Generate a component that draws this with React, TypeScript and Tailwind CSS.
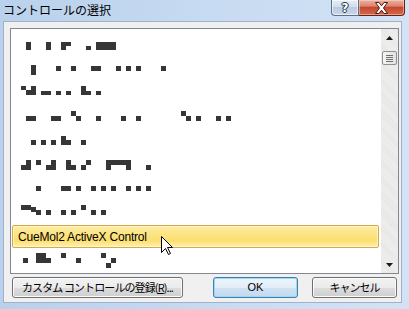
import React from "react";

type R = [number, number, number, number];

const rows: R[][] = [
  [[14, 9, 5, 8], [34, 9, 5, 8], [49, 9, 10, 4], [49, 13, 5, 4], [74, 13, 5, 4], [84, 9, 20, 8]],
  [[19, 8, 5, 10], [44, 9, 5, 5], [59, 9, 5, 5], [79, 9, 10, 5], [104, 9, 5, 5], [114, 9, 5, 5], [124, 9, 5, 5], [149, 9, 5, 5]],
  [[9, 5, 5, 4], [19, 5, 5, 4], [14, 9, 10, 5], [29, 10, 10, 4], [44, 10, 5, 4], [54, 10, 5, 4], [69, 5, 5, 9], [74, 10, 5, 4], [84, 10, 5, 4]],
  [[14, 11, 10, 5], [39, 11, 10, 5], [59, 6, 5, 5], [64, 11, 5, 5], [84, 11, 5, 5], [109, 11, 5, 5], [124, 11, 5, 5], [169, 6, 5, 5], [174, 11, 5, 5], [184, 11, 5, 5], [204, 11, 5, 5], [214, 11, 5, 5]],
  [[49, 7, 5, 4], [19, 11, 5, 5], [29, 11, 5, 5], [39, 11, 5, 5], [49, 11, 10, 5], [69, 11, 5, 5]],
  [[9, 12, 5, 5], [14, 7, 5, 10], [24, 7, 5, 5], [34, 12, 5, 5], [39, 7, 5, 10], [54, 7, 5, 10], [59, 12, 5, 5], [69, 12, 5, 5], [74, 7, 5, 5], [94, 7, 25, 5], [94, 12, 5, 5], [114, 12, 5, 5], [134, 12, 5, 5]],
  [[24, 9, 5, 5], [49, 9, 10, 5], [64, 9, 5, 5], [79, 9, 5, 5], [89, 9, 5, 5], [99, 9, 5, 5], [114, 9, 5, 5], [124, 9, 5, 5], [134, 9, 5, 5]],
  [[9, 4, 10, 5], [19, 6, 5, 5], [24, 9, 5, 5], [34, 9, 5, 5], [49, 9, 5, 5], [59, 9, 5, 5], [69, 4, 5, 5], [79, 9, 5, 5], [89, 9, 5, 5]],
];

const lastRow: R[] = [[11, 9, 5, 5], [24, 4, 10, 10], [34, 9, 5, 5], [49, 4, 5, 5], [64, 9, 5, 5], [89, 4, 5, 5], [99, 9, 5, 5], [94, 14, 5, 5]];

function Blocks({ rects }: { rects: R[] }) {
  return (
    <svg width="367" height="23" className="block">
      {rects.map((r, i) => (
        <rect key={i} x={r[0]} y={r[1]} width={r[2]} height={r[3]} fill="#363636" />
      ))}
    </svg>
  );
}

const jp = "font-['Noto_Sans_CJK_JP',sans-serif]";

const btnBase =
  "h-[21px] rounded-[3px] border flex items-center justify-center text-black leading-none";
const grayBtn =
  "border-[#707070] bg-[linear-gradient(to_bottom,#f2f2f2_0%,#ebebeb_50%,#dddddd_50%,#cfcfcf_100%)] shadow-[inset_0_0_0_1px_#fbfbfb]";

export default function App() {
  return (
    <div className="relative w-[409px] h-[309px] overflow-hidden bg-[linear-gradient(to_right,#b9d1ec,#c9dcf2_60%,#d3e3f5)]">
      {/* title bar */}
      <div className="flex h-[21px]">
        <div className={`pl-[3px] pt-[2px] text-[12px] leading-[16px] text-black ${jp}`}>コントロールの選択</div>
        <div className="flex-1" />
        <div className="flex h-[16px] mr-[4px]">
          <div className="w-[28px] h-[16px] border border-[#5e6f86] border-t-0 rounded-bl-[4px] bg-[linear-gradient(to_bottom,#e6edf6,#d2deec_45%,#bccbdf_50%,#c8d6e8)] flex items-center justify-center shadow-[inset_0_0_0_1px_rgba(255,255,255,0.6)]">
            <span className="font-['DejaVu_Sans',sans-serif] font-bold text-[12px] leading-none text-white [text-shadow:0_0_1px_#2a3a50,0_0_1px_#2a3a50,1px_0_0_#2a3a50,-1px_0_0_#2a3a50,0_1px_0_#2a3a50,0_-1px_0_#2a3a50]">?</span>
          </div>
          <div className="w-[46px] h-[16px] border border-[#6b1e12] border-t-0 border-l-0 rounded-br-[4px] bg-[linear-gradient(to_bottom,#eab0a0,#dc8670_40%,#c7472e_50%,#cf6a4c_100%)] flex items-center justify-center shadow-[inset_0_0_0_1px_rgba(255,220,210,0.5)]">
            <svg width="15" height="12" viewBox="0 0 15 12">
              <path d="M1.5 0.5 L5 0.5 L7.5 3.8 L10 0.5 L13.5 0.5 L9.5 6 L13.5 11.5 L10 11.5 L7.5 8.2 L5 11.5 L1.5 11.5 L5.5 6 Z" fill="#ffffff" stroke="#4a1a10" strokeWidth="1" strokeLinejoin="round" />
            </svg>
          </div>
        </div>
      </div>

      {/* client area */}
      <div className="ml-[3px] w-[399px] h-[282px] border border-[#9fb2c9] bg-[#f0f0f0] pl-[6px] pt-[6px]">
        {/* listbox */}
        <div className="w-[389px] h-[246px] border border-[#828790] bg-white flex">
          <div className="flex-1 pt-[4px] pl-[1px] pr-[2px] overflow-hidden">
            {rows.map((r, i) => (
              <div key={i} className="h-[23px] mb-[1px]">
                <Blocks rects={r} />
              </div>
            ))}
            <div className="h-[23px] mb-[1px] rounded-[2px] border border-[#d6a84a] bg-[linear-gradient(to_bottom,#fdeda6_0%,#fde485_35%,#fddf6f_70%,#fff0b5_100%)] shadow-[inset_0_0_0_1px_rgba(255,250,220,0.7)] flex items-center pl-[5px]">
              <span className="font-['Liberation_Sans',sans-serif] text-[12px] leading-none tracking-[-0.2px] text-black">CueMol2 ActiveX Control</span>
            </div>
            <div className="h-[23px]">
              <Blocks rects={lastRow} />
            </div>
          </div>
          {/* scrollbar */}
          <div className="w-[17px] flex flex-col bg-[repeating-linear-gradient(45deg,#efefef_0px,#efefef_1px,#e6e6e6_1px,#e6e6e6_2px)]">
            <div className="h-[17px] flex items-center justify-center">
              <svg width="7" height="4" viewBox="0 0 7 4"><path d="M3.5 0 L7 4 L0 4 Z" fill="#1a1a1a" /></svg>
            </div>
            <div className="mt-[5px] mx-[1px] h-[14px] rounded-[2px] border border-[#8e8f8f] bg-[linear-gradient(to_right,#f4f4f4,#e2e2e2)] flex flex-col items-center justify-center gap-[1px]">
              <div className="w-[7px] h-[1px] bg-[#6f6f6f]" />
              <div className="w-[7px] h-[1px] bg-[#6f6f6f]" />
              <div className="w-[7px] h-[1px] bg-[#6f6f6f]" />
              <div className="w-[7px] h-[1px] bg-[#6f6f6f]" />
            </div>
            <div className="flex-1" />
            <div className="h-[17px] flex items-center justify-center">
              <svg width="7" height="4" viewBox="0 0 7 4"><path d="M0 0 L7 0 L3.5 4 Z" fill="#1a1a1a" /></svg>
            </div>
          </div>
        </div>

        {/* buttons */}
        <div className="flex mt-[3px]">
          <div className={`ml-[2px] w-[171px] ${btnBase} ${grayBtn}`}>
            <span className={`text-[11px] tracking-[-0.9px] ${jp}`}>
              カスタム コントロールの登録(<span className="underline">R</span>)...
            </span>
          </div>
          <div className={`ml-[30px] w-[85px] ${btnBase} border-[#3c7fb1] bg-[linear-gradient(to_bottom,#eef5fb_0%,#e2edf7_50%,#d0e2f2_50%,#c2d9ee_100%)] shadow-[inset_0_0_0_1px_#9fd7f5]`}>
            <span className="font-['Liberation_Sans',sans-serif] text-[11px]">OK</span>
          </div>
          <div className={`ml-[14px] w-[85px] ${btnBase} ${grayBtn}`}>
            <span className={`text-[11px] tracking-[-1px] ${jp}`}>キャンセル</span>
          </div>
        </div>
      </div>

      {/* mouse cursor */}
      <svg className="absolute left-[161px] top-[236px]" width="13" height="20" viewBox="0 0 13 20">
        <path d="M0.5 0.5 L0.5 16.5 L4.5 12.5 L7.5 18.5 L9.5 17.5 L6.5 11.5 L11.5 11.5 Z" fill="#ffffff" stroke="#000000" strokeWidth="1" strokeLinejoin="miter" />
      </svg>
    </div>
  );
}
